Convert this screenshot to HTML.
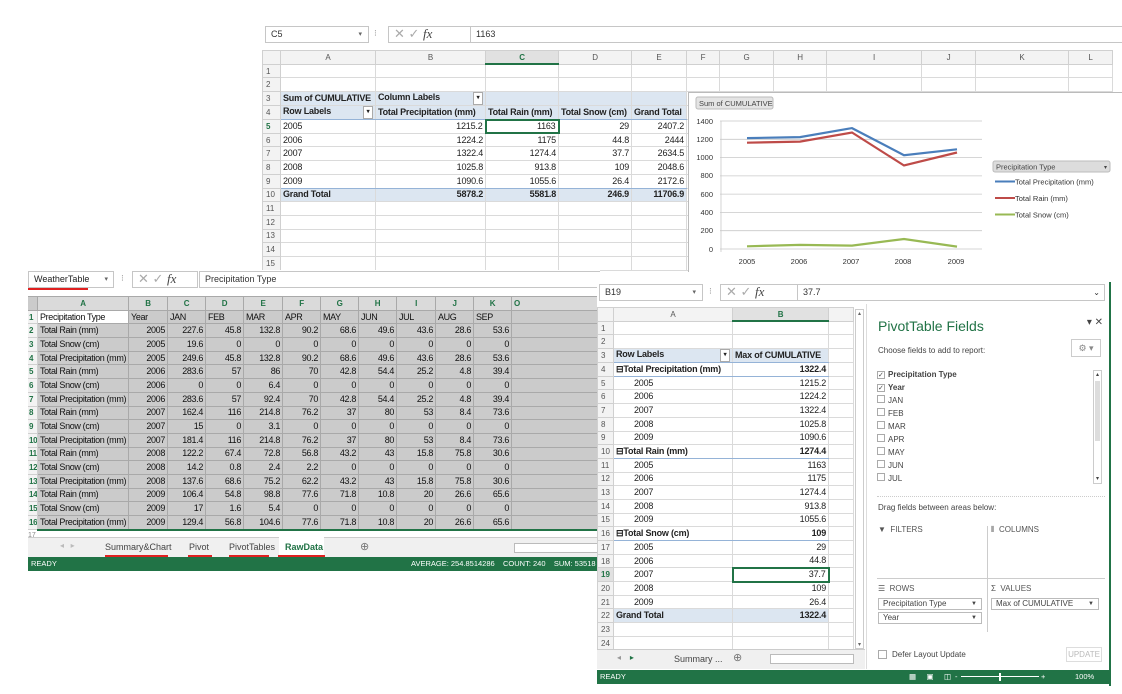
<!DOCTYPE html>
<html><head><meta charset="utf-8"><style>
*{margin:0;padding:0;box-sizing:border-box}
body{width:1122px;height:694px;background:#fff;position:relative;overflow:hidden;font-family:"Liberation Sans",Arial,sans-serif;color:#222}
.abs{position:absolute}
.win{position:absolute;background:#fff;overflow:hidden}
.fbar{position:absolute;height:17px;border:1px solid #c6c6c6;background:#fff;font-size:9px;line-height:15px;padding-left:5px;color:#333}
table{border-collapse:collapse;table-layout:fixed;position:absolute}
td{border:1px solid #dadada;font-size:9px;line-height:11px;padding:0 2px;white-space:nowrap;overflow:hidden;height:13.7px;letter-spacing:-0.2px}
tr{height:13.7px}
.rh{background:#f3f3f3;color:#555;text-align:left;font-size:8px;padding-left:3px;border-color:#d0d0d0;letter-spacing:0}
.ch td{background:#f3f3f3;color:#555;text-align:center;font-size:8px;border-color:#d0d0d0}
.r{text-align:right}
.b{font-weight:bold}
.pv td.p{background:#dce6f1}
.gr td{background:#cbcbcb;border-color:#a9a9a9;color:#111;letter-spacing:-0.35px}
.gr td.rh{background:#f3f3f3;color:#217346;font-weight:bold;border-color:#d0d0d0}
.status{position:absolute;background:#217346;color:#fff;font-size:7.5px;line-height:14px;padding-left:3px}
.tab{position:absolute;font-size:9px;color:#444}
.ul{position:absolute;height:2px;background:#e02020}
</style></head><body>

<!-- WINDOW 1 -->
<div class="win" style="left:262px;top:24px;width:860px;height:248px">
 <div class="fbar" style="left:3px;top:2px;width:104px">C5<span style="position:absolute;right:6px;font-size:7px;color:#666">▾</span></div>
 <div class="abs" style="left:112px;top:4px;font-size:9px;color:#999">⁝</div>
 <div class="fbar" style="left:126px;top:2px;width:84px;color:#aaa;font-size:13px;line-height:14px">✕ ✓ <i style="font-family:'Liberation Serif';color:#444">fx</i></div>
 <div class="fbar" style="left:208px;top:2px;width:660px">1163</div>
 <table style="left:0;top:26px;width:850px">
  <colgroup><col style="width:18px"><col style="width:95px"><col style="width:110px"><col style="width:73px"><col style="width:73px"><col style="width:55px"><col style="width:33px"><col style="width:54px"><col style="width:53px"><col style="width:95px"><col style="width:54px"><col style="width:93px"><col style="width:44px"></colgroup>
  <tr class="ch"><td></td><td>A</td><td>B</td><td style="color:#217346;font-weight:bold;background:#e1e1e1;border-bottom:2px solid #217346">C</td><td>D</td><td>E</td><td>F</td><td>G</td><td>H</td><td>I</td><td>J</td><td>K</td><td>L</td></tr>
  <tr><td class="rh">1</td><td></td><td></td><td></td><td></td><td></td><td></td><td></td><td></td><td></td><td></td><td></td><td></td></tr>
  <tr><td class="rh">2</td><td></td><td></td><td></td><td></td><td></td><td></td><td></td><td></td><td></td><td></td><td></td><td></td></tr>
  <tr class="pv"><td class="rh">3</td><td class="p b">Sum of CUMULATIVE</td><td class="p b">Column Labels <span style="float:right;border:1px solid #aaa;background:#fff;font-size:6px;width:10px;text-align:center">▾</span></td><td class="p"></td><td class="p"></td><td class="p"></td><td></td><td></td><td></td><td></td><td></td><td></td><td></td></tr>
  <tr class="pv"><td class="rh">4</td><td class="p b" style="border-bottom:1px solid #95b3d7">Row Labels<span style="float:right;border:1px solid #aaa;background:#fff;font-size:6px;width:10px;text-align:center">▾</span></td><td class="p b" style="border-bottom:1px solid #95b3d7">Total Precipitation (mm)</td><td class="p b" style="border-bottom:1px solid #95b3d7">Total Rain (mm)</td><td class="p b" style="border-bottom:1px solid #95b3d7">Total Snow (cm)</td><td class="p b" style="border-bottom:1px solid #95b3d7">Grand Total</td><td></td><td></td><td></td><td></td><td></td><td></td><td></td></tr>
  <tr><td class="rh" style="color:#217346;font-weight:bold">5</td><td>2005</td><td class="r">1215.2</td><td class="r" style="border:2px solid #217346">1163</td><td class="r">29</td><td class="r">2407.2</td><td></td><td></td><td></td><td></td><td></td><td></td><td></td></tr>
  <tr><td class="rh">6</td><td>2006</td><td class="r">1224.2</td><td class="r">1175</td><td class="r">44.8</td><td class="r">2444</td><td></td><td></td><td></td><td></td><td></td><td></td><td></td></tr>
  <tr><td class="rh">7</td><td>2007</td><td class="r">1322.4</td><td class="r">1274.4</td><td class="r">37.7</td><td class="r">2634.5</td><td></td><td></td><td></td><td></td><td></td><td></td><td></td></tr>
  <tr><td class="rh">8</td><td>2008</td><td class="r">1025.8</td><td class="r">913.8</td><td class="r">109</td><td class="r">2048.6</td><td></td><td></td><td></td><td></td><td></td><td></td><td></td></tr>
  <tr><td class="rh">9</td><td style="border-bottom:1px solid #95b3d7">2009</td><td class="r" style="border-bottom:1px solid #95b3d7">1090.6</td><td class="r" style="border-bottom:1px solid #95b3d7">1055.6</td><td class="r" style="border-bottom:1px solid #95b3d7">26.4</td><td class="r" style="border-bottom:1px solid #95b3d7">2172.6</td><td></td><td></td><td></td><td></td><td></td><td></td><td></td></tr>
  <tr class="pv"><td class="rh">10</td><td class="p b">Grand Total</td><td class="p b r">5878.2</td><td class="p b r">5581.8</td><td class="p b r">246.9</td><td class="p b r">11706.9</td><td></td><td></td><td></td><td></td><td></td><td></td><td></td></tr>
  <tr><td class="rh">11</td><td></td><td></td><td></td><td></td><td></td><td></td><td></td><td></td><td></td><td></td><td></td><td></td></tr>
  <tr><td class="rh">12</td><td></td><td></td><td></td><td></td><td></td><td></td><td></td><td></td><td></td><td></td><td></td><td></td></tr>
  <tr><td class="rh">13</td><td></td><td></td><td></td><td></td><td></td><td></td><td></td><td></td><td></td><td></td><td></td><td></td></tr>
  <tr><td class="rh">14</td><td></td><td></td><td></td><td></td><td></td><td></td><td></td><td></td><td></td><td></td><td></td><td></td></tr>
  <tr><td class="rh">15</td><td></td><td></td><td></td><td></td><td></td><td></td><td></td><td></td><td></td><td></td><td></td><td></td></tr>
 </table>
</div>

<!-- CHART -->
<svg class="abs" style="left:688px;top:92px" width="434" height="180" viewBox="688 92 434 180">
 <rect x="688.5" y="92.5" width="440" height="190" fill="#fff" stroke="#bbb"/>
 <rect x="696" y="97" width="77" height="12" rx="2" fill="#e4e4e4" stroke="#bbb"/>
 <text x="699" y="106" font-size="7.5" fill="#444" font-family="Liberation Sans">Sum of CUMULATIVE</text>
 <g stroke="#c9c9c9" stroke-width="0.8">
  <line x1="720" x2="982" y1="121" y2="121"/><line x1="720" x2="982" y1="139.3" y2="139.3"/><line x1="720" x2="982" y1="157.6" y2="157.6"/><line x1="720" x2="982" y1="175.9" y2="175.9"/><line x1="720" x2="982" y1="194.1" y2="194.1"/><line x1="720" x2="982" y1="212.4" y2="212.4"/><line x1="720" x2="982" y1="230.7" y2="230.7"/><line x1="720" x2="982" y1="249" y2="249"/>
  <line x1="721" x2="721" y1="121" y2="252"/>
 </g>
 <g font-size="7.5" fill="#333" font-family="Liberation Sans" text-anchor="end">
  <text x="713" y="124">1400</text><text x="713" y="142">1200</text><text x="713" y="160">1000</text><text x="713" y="178">800</text><text x="713" y="197">600</text><text x="713" y="215">400</text><text x="713" y="233">200</text><text x="713" y="252">0</text>
 </g>
 <g font-size="7.5" fill="#333" font-family="Liberation Sans" text-anchor="middle">
  <text x="747" y="264">2005</text><text x="799" y="264">2006</text><text x="851" y="264">2007</text><text x="903" y="264">2008</text><text x="956" y="264">2009</text>
 </g>
 <polyline fill="none" stroke="#4a7ebb" stroke-width="2.2" points="747,138.1 800,137.1 852,128.1 904,155.2 957,149.3"/>
 <polyline fill="none" stroke="#be4b48" stroke-width="2.2" points="747,142.7 800,141.6 852,132.5 904,165.5 957,152.5"/>
 <polyline fill="none" stroke="#98b954" stroke-width="2.2" points="747,246.3 800,244.9 852,245.6 904,239 957,246.6"/>
 <rect x="993" y="161" width="117" height="11" rx="2" fill="#dcdcdc" stroke="#bbb"/>
 <text x="996" y="169.5" font-size="7.5" fill="#444" font-family="Liberation Sans">Precipitation Type</text>
 <text x="1104" y="169" font-size="6" fill="#444">▾</text>
 <line x1="995" x2="1015" y1="181.5" y2="181.5" stroke="#4a7ebb" stroke-width="2"/>
 <line x1="995" x2="1015" y1="198" y2="198" stroke="#be4b48" stroke-width="2"/>
 <line x1="995" x2="1015" y1="214.5" y2="214.5" stroke="#98b954" stroke-width="2"/>
 <g font-size="7.5" fill="#333" font-family="Liberation Sans">
  <text x="1015" y="184.5">Total Precipitation (mm)</text><text x="1015" y="201">Total Rain (mm)</text><text x="1015" y="217.5">Total Snow (cm)</text>
 </g>
</svg>

<!-- WINDOW 2 -->
<div class="win" style="left:28px;top:270px;width:572px;height:302px">
 <div class="fbar" style="left:0;top:1px;width:86px;color:#222">WeatherTable<span style="position:absolute;right:5px;font-size:7px;color:#666">▾</span></div>
 <div class="ul" style="left:0;top:18px;width:60px"></div>
 <div class="abs" style="left:93px;top:3px;font-size:9px;color:#999">⁝</div>
 <div class="fbar" style="left:104px;top:1px;width:66px;color:#aaa;font-size:13px;line-height:14px">✕ ✓ <i style="font-family:'Liberation Serif';color:#444">fx</i></div>
 <div class="fbar" style="left:171px;top:1px;width:410px">Precipitation Type</div>
 <table style="left:-3px;top:26px;width:590px" class="gr">
  <colgroup><col style="width:12px"><col style="width:91px"><col style="width:39px"><col style="width:38px"><col style="width:38px"><col style="width:39px"><col style="width:38px"><col style="width:38px"><col style="width:38px"><col style="width:39px"><col style="width:38px"><col style="width:38px"><col style="width:138px"></colgroup>
  <tr class="ch"><td></td><td style="background:#dadada;color:#217346;font-weight:bold">A</td><td style="background:#dadada;color:#217346;font-weight:bold">B</td><td style="background:#dadada;color:#217346;font-weight:bold">C</td><td style="background:#dadada;color:#217346;font-weight:bold">D</td><td style="background:#dadada;color:#217346;font-weight:bold">E</td><td style="background:#dadada;color:#217346;font-weight:bold">F</td><td style="background:#dadada;color:#217346;font-weight:bold">G</td><td style="background:#dadada;color:#217346;font-weight:bold">H</td><td style="background:#dadada;color:#217346;font-weight:bold">I</td><td style="background:#dadada;color:#217346;font-weight:bold">J</td><td style="background:#dadada;color:#217346;font-weight:bold">K</td><td style="background:#dadada;color:#217346;font-weight:bold;text-align:left">O</td></tr>
  <tr><td class="rh">1</td><td style="background:#fff">Precipitation Type</td><td>Year</td><td>JAN</td><td>FEB</td><td>MAR</td><td>APR</td><td>MAY</td><td>JUN</td><td>JUL</td><td>AUG</td><td>SEP</td><td></td></tr>
  <tr><td class="rh">2</td><td>Total Rain (mm)</td><td class="r">2005</td><td class="r">227.6</td><td class="r">45.8</td><td class="r">132.8</td><td class="r">90.2</td><td class="r">68.6</td><td class="r">49.6</td><td class="r">43.6</td><td class="r">28.6</td><td class="r">53.6</td><td></td></tr>
  <tr><td class="rh">3</td><td>Total Snow (cm)</td><td class="r">2005</td><td class="r">19.6</td><td class="r">0</td><td class="r">0</td><td class="r">0</td><td class="r">0</td><td class="r">0</td><td class="r">0</td><td class="r">0</td><td class="r">0</td><td></td></tr>
  <tr><td class="rh">4</td><td>Total Precipitation (mm)</td><td class="r">2005</td><td class="r">249.6</td><td class="r">45.8</td><td class="r">132.8</td><td class="r">90.2</td><td class="r">68.6</td><td class="r">49.6</td><td class="r">43.6</td><td class="r">28.6</td><td class="r">53.6</td><td></td></tr>
  <tr><td class="rh">5</td><td>Total Rain (mm)</td><td class="r">2006</td><td class="r">283.6</td><td class="r">57</td><td class="r">86</td><td class="r">70</td><td class="r">42.8</td><td class="r">54.4</td><td class="r">25.2</td><td class="r">4.8</td><td class="r">39.4</td><td></td></tr>
  <tr><td class="rh">6</td><td>Total Snow (cm)</td><td class="r">2006</td><td class="r">0</td><td class="r">0</td><td class="r">6.4</td><td class="r">0</td><td class="r">0</td><td class="r">0</td><td class="r">0</td><td class="r">0</td><td class="r">0</td><td></td></tr>
  <tr><td class="rh">7</td><td>Total Precipitation (mm)</td><td class="r">2006</td><td class="r">283.6</td><td class="r">57</td><td class="r">92.4</td><td class="r">70</td><td class="r">42.8</td><td class="r">54.4</td><td class="r">25.2</td><td class="r">4.8</td><td class="r">39.4</td><td></td></tr>
  <tr><td class="rh">8</td><td>Total Rain (mm)</td><td class="r">2007</td><td class="r">162.4</td><td class="r">116</td><td class="r">214.8</td><td class="r">76.2</td><td class="r">37</td><td class="r">80</td><td class="r">53</td><td class="r">8.4</td><td class="r">73.6</td><td></td></tr>
  <tr><td class="rh">9</td><td>Total Snow (cm)</td><td class="r">2007</td><td class="r">15</td><td class="r">0</td><td class="r">3.1</td><td class="r">0</td><td class="r">0</td><td class="r">0</td><td class="r">0</td><td class="r">0</td><td class="r">0</td><td></td></tr>
  <tr><td class="rh">10</td><td>Total Precipitation (mm)</td><td class="r">2007</td><td class="r">181.4</td><td class="r">116</td><td class="r">214.8</td><td class="r">76.2</td><td class="r">37</td><td class="r">80</td><td class="r">53</td><td class="r">8.4</td><td class="r">73.6</td><td></td></tr>
  <tr><td class="rh">11</td><td>Total Rain (mm)</td><td class="r">2008</td><td class="r">122.2</td><td class="r">67.4</td><td class="r">72.8</td><td class="r">56.8</td><td class="r">43.2</td><td class="r">43</td><td class="r">15.8</td><td class="r">75.8</td><td class="r">30.6</td><td></td></tr>
  <tr><td class="rh">12</td><td>Total Snow (cm)</td><td class="r">2008</td><td class="r">14.2</td><td class="r">0.8</td><td class="r">2.4</td><td class="r">2.2</td><td class="r">0</td><td class="r">0</td><td class="r">0</td><td class="r">0</td><td class="r">0</td><td></td></tr>
  <tr><td class="rh">13</td><td>Total Precipitation (mm)</td><td class="r">2008</td><td class="r">137.6</td><td class="r">68.6</td><td class="r">75.2</td><td class="r">62.2</td><td class="r">43.2</td><td class="r">43</td><td class="r">15.8</td><td class="r">75.8</td><td class="r">30.6</td><td></td></tr>
  <tr><td class="rh">14</td><td>Total Rain (mm)</td><td class="r">2009</td><td class="r">106.4</td><td class="r">54.8</td><td class="r">98.8</td><td class="r">77.6</td><td class="r">71.8</td><td class="r">10.8</td><td class="r">20</td><td class="r">26.6</td><td class="r">65.6</td><td></td></tr>
  <tr><td class="rh">15</td><td>Total Snow (cm)</td><td class="r">2009</td><td class="r">17</td><td class="r">1.6</td><td class="r">5.4</td><td class="r">0</td><td class="r">0</td><td class="r">0</td><td class="r">0</td><td class="r">0</td><td class="r">0</td><td></td></tr>
  <tr><td class="rh">16</td><td>Total Precipitation (mm)</td><td class="r">2009</td><td class="r">129.4</td><td class="r">56.8</td><td class="r">104.6</td><td class="r">77.6</td><td class="r">71.8</td><td class="r">10.8</td><td class="r">20</td><td class="r">26.6</td><td class="r">65.6</td><td></td></tr>
 </table>
 <div class="abs" style="left:9px;top:259px;width:560px;height:2px;background:#217346"></div>
 <div class="abs" style="left:0;top:262px;width:572px;height:6px;background:#fff;font-size:7px;color:#888">17</div>
 <div class="abs" style="left:0;top:267px;width:572px;height:20px;background:#f0f0f0;border-top:1px solid #ccc"></div>
 <div class="tab" style="left:32px;top:271px;color:#bbb;font-size:8px">◂ &nbsp; ▸</div>
 <div class="tab" style="left:77px;top:272px">Summary&amp;Chart</div><div class="ul" style="left:77px;top:285px;width:63px"></div>
 <div class="tab" style="left:161px;top:272px">Pivot</div><div class="ul" style="left:160px;top:285px;width:24px"></div>
 <div class="tab" style="left:201px;top:272px">PivotTables</div><div class="ul" style="left:201px;top:285px;width:40px"></div>
 <div class="abs" style="left:251px;top:267px;width:45px;height:18px;background:#fff"></div>
 <div class="tab" style="left:257px;top:272px;color:#217346;font-weight:bold">RawData</div><div class="ul" style="left:250px;top:285px;width:47px"></div>
 <div class="tab" style="left:332px;top:270px;color:#777;font-size:11px">⊕</div>
 <div class="abs" style="left:486px;top:273px;width:90px;height:10px;border:1px solid #bbb;background:#fff"></div>
 <div class="status" style="left:0;top:287px;width:572px">READY<span style="position:absolute;left:383px">AVERAGE: 254.8514286 &nbsp;&nbsp; COUNT: 240 &nbsp;&nbsp; SUM: 53518</span></div>
</div>

<!-- WINDOW 3 -->
<div class="win" style="left:597px;top:282px;width:514px;height:404px;border-right:2px solid #217346">
 <div class="fbar" style="left:2px;top:2px;width:104px">B19<span style="position:absolute;right:6px;font-size:7px;color:#666">▾</span></div>
 <div class="abs" style="left:112px;top:4px;font-size:9px;color:#999">⁝</div>
 <div class="fbar" style="left:123px;top:2px;width:78px;color:#aaa;font-size:13px;line-height:14px">✕ ✓ <i style="font-family:'Liberation Serif';color:#444">fx</i></div>
 <div class="fbar" style="left:200px;top:2px;width:308px">37.7<span style="position:absolute;right:4px;font-size:8px">⌄</span></div>
 <table style="left:0;top:25px;width:256px">
  <colgroup><col style="width:16px"><col style="width:119px"><col style="width:96px"><col style="width:25px"></colgroup>
  <tr class="ch"><td></td><td>A</td><td style="color:#217346;font-weight:bold;background:#e1e1e1;border-bottom:2px solid #217346">B</td><td></td></tr>
  <tr><td class="rh">1</td><td></td><td></td><td></td></tr>
  <tr><td class="rh">2</td><td></td><td></td><td></td></tr>
  <tr class="pv"><td class="rh">3</td><td class="p b" style="border-bottom:1px solid #95b3d7">Row Labels<span style="float:right;border:1px solid #aaa;background:#fff;font-size:6px;width:10px;text-align:center">▾</span></td><td class="p b" style="border-bottom:1px solid #95b3d7">Max of CUMULATIVE</td><td></td></tr>
  <tr><td class="rh">4</td><td class="b" style="border-bottom:1px solid #95b3d7">⊟Total Precipitation (mm)</td><td class="b r" style="border-bottom:1px solid #95b3d7">1322.4</td><td></td></tr>
  <tr><td class="rh">5</td><td style="padding-left:20px">2005</td><td class="r">1215.2</td><td></td></tr>
  <tr><td class="rh">6</td><td style="padding-left:20px">2006</td><td class="r">1224.2</td><td></td></tr>
  <tr><td class="rh">7</td><td style="padding-left:20px">2007</td><td class="r">1322.4</td><td></td></tr>
  <tr><td class="rh">8</td><td style="padding-left:20px">2008</td><td class="r">1025.8</td><td></td></tr>
  <tr><td class="rh">9</td><td style="padding-left:20px">2009</td><td class="r">1090.6</td><td></td></tr>
  <tr><td class="rh">10</td><td class="b" style="border-bottom:1px solid #95b3d7">⊟Total Rain (mm)</td><td class="b r" style="border-bottom:1px solid #95b3d7">1274.4</td><td></td></tr>
  <tr><td class="rh">11</td><td style="padding-left:20px">2005</td><td class="r">1163</td><td></td></tr>
  <tr><td class="rh">12</td><td style="padding-left:20px">2006</td><td class="r">1175</td><td></td></tr>
  <tr><td class="rh">13</td><td style="padding-left:20px">2007</td><td class="r">1274.4</td><td></td></tr>
  <tr><td class="rh">14</td><td style="padding-left:20px">2008</td><td class="r">913.8</td><td></td></tr>
  <tr><td class="rh">15</td><td style="padding-left:20px">2009</td><td class="r">1055.6</td><td></td></tr>
  <tr><td class="rh">16</td><td class="b" style="border-bottom:1px solid #95b3d7">⊟Total Snow (cm)</td><td class="b r" style="border-bottom:1px solid #95b3d7">109</td><td></td></tr>
  <tr><td class="rh">17</td><td style="padding-left:20px">2005</td><td class="r">29</td><td></td></tr>
  <tr><td class="rh">18</td><td style="padding-left:20px">2006</td><td class="r">44.8</td><td></td></tr>
  <tr><td class="rh" style="color:#217346;font-weight:bold;background:#e1e1e1">19</td><td style="padding-left:20px">2007</td><td class="r" style="border:2px solid #217346">37.7</td><td></td></tr>
  <tr><td class="rh">20</td><td style="padding-left:20px">2008</td><td class="r">109</td><td></td></tr>
  <tr><td class="rh">21</td><td style="padding-left:20px">2009</td><td class="r">26.4</td><td></td></tr>
  <tr class="pv"><td class="rh">22</td><td class="p b">Grand Total</td><td class="p b r">1322.4</td><td></td></tr>
  <tr><td class="rh">23</td><td></td><td></td><td></td></tr>
  <tr><td class="rh">24</td><td></td><td></td><td></td></tr>
 </table>
 <div class="abs" style="left:258px;top:27px;width:9px;height:340px;border:1px solid #ccc;background:#fff;font-size:6px;color:#666;text-align:center">▴<div style="position:absolute;bottom:0;width:100%">▾</div></div>
 <div class="abs" style="left:0;top:367px;width:268px;height:20px;background:#f0f0f0;border-top:1px solid #ccc"></div>
 <div class="tab" style="left:20px;top:371px;color:#999;font-size:8px">◂ &nbsp;&nbsp; <span style="color:#217346">▸</span></div>
 <div class="tab" style="left:77px;top:372px">Summary ...</div>
 <div class="tab" style="left:136px;top:369px;color:#777;font-size:11px">⊕</div>
 <div class="abs" style="left:173px;top:372px;width:84px;height:10px;border:1px solid #bbb;background:#fff"></div>
 <!-- panel -->
 <div class="abs" style="left:269px;top:22px;width:243px;height:365px;background:#fff;border-left:1px solid #ddd">
  <div class="abs" style="left:11px;top:14px;font-size:14px;color:#217346">PivotTable Fields</div>
  <div class="abs" style="right:6px;top:13px;font-size:10px;color:#444">▾ ✕</div>
  <div class="abs" style="left:11px;top:42px;font-size:8px;color:#444">Choose fields to add to report:</div>
  <div class="abs" style="right:8px;top:35px;width:30px;height:18px;border:1px solid #ccc;font-size:9px;color:#888;text-align:center;line-height:16px">⚙ ▾</div>
  <div class="abs" style="left:10px;top:64px;width:225px;height:118px;font-size:8px;line-height:13px;color:#444">
   <div><span style="display:inline-block;width:8px;height:8px;border:1px solid #aaa;font-size:7px;line-height:7px;margin-right:3px">✓</span><b>Precipitation Type</b></div>
   <div><span style="display:inline-block;width:8px;height:8px;border:1px solid #aaa;font-size:7px;line-height:7px;margin-right:3px">✓</span><b>Year</b></div>
   <div><span style="display:inline-block;width:8px;height:8px;border:1px solid #aaa;margin-right:3px"></span>JAN</div>
   <div><span style="display:inline-block;width:8px;height:8px;border:1px solid #aaa;margin-right:3px"></span>FEB</div>
   <div><span style="display:inline-block;width:8px;height:8px;border:1px solid #aaa;margin-right:3px"></span>MAR</div>
   <div><span style="display:inline-block;width:8px;height:8px;border:1px solid #aaa;margin-right:3px"></span>APR</div>
   <div><span style="display:inline-block;width:8px;height:8px;border:1px solid #aaa;margin-right:3px"></span>MAY</div>
   <div><span style="display:inline-block;width:8px;height:8px;border:1px solid #aaa;margin-right:3px"></span>JUN</div>
   <div><span style="display:inline-block;width:8px;height:8px;border:1px solid #aaa;margin-right:3px"></span>JUL</div>
   <div class="abs" style="right:0;top:2px;width:9px;height:114px;border:1px solid #ccc;font-size:6px;text-align:center;line-height:8px">▴<div style="position:absolute;top:10px;left:1px;width:5px;height:60px;background:#ddd"></div><div style="position:absolute;bottom:0;width:100%">▾</div></div>
  </div>
  <div class="abs" style="left:10px;top:192px;width:228px;border-top:1px dotted #ccc"></div>
  <div class="abs" style="left:11px;top:199px;font-size:8px;color:#444">Drag fields between areas below:</div>
  <div class="abs" style="left:11px;top:221px;font-size:8px;color:#555">▼ &nbsp;FILTERS</div>
  <div class="abs" style="left:124px;top:221px;font-size:8px;color:#555">⦀ &nbsp;COLUMNS</div>
  <div class="abs" style="left:120px;top:222px;height:106px;border-left:1px solid #ccc"></div>
  <div class="abs" style="left:10px;top:274px;width:228px;border-top:1px solid #ccc"></div>
  <div class="abs" style="left:11px;top:280px;font-size:8px;color:#555">☰ &nbsp;ROWS</div>
  <div class="abs" style="left:124px;top:280px;font-size:8px;color:#555">Σ &nbsp;VALUES</div>
  <div class="abs" style="left:11px;top:294px;width:104px;height:12px;border:1px solid #bbb;font-size:8px;line-height:10px;padding-left:4px;color:#444">Precipitation Type<span style="position:absolute;right:4px;font-size:6px">▼</span></div>
  <div class="abs" style="left:11px;top:308px;width:104px;height:12px;border:1px solid #bbb;font-size:8px;line-height:10px;padding-left:4px;color:#444">Year<span style="position:absolute;right:4px;font-size:6px">▼</span></div>
  <div class="abs" style="left:124px;top:294px;width:108px;height:12px;border:1px solid #bbb;font-size:8px;line-height:10px;padding-left:4px;color:#444">Max of CUMULATIVE<span style="position:absolute;right:4px;font-size:6px">▼</span></div>
  <div class="abs" style="left:11px;top:346px;width:9px;height:9px;border:1px solid #aaa"></div>
  <div class="abs" style="left:25px;top:346px;font-size:8px;color:#444">Defer Layout Update</div>
  <div class="abs" style="right:7px;top:343px;width:36px;height:15px;border:1px solid #ddd;font-size:8px;color:#bbb;text-align:center;line-height:13px">UPDATE</div>
 </div>
 <div class="status" style="left:0;top:388px;width:514px;height:14px">READY
  <span style="position:absolute;left:312px">▦ &nbsp;&nbsp;&nbsp; ▣ &nbsp;&nbsp;&nbsp; ◫</span>
  <span style="position:absolute;left:364px;top:6px;width:78px;height:1px;background:#fff"></span>
  <span style="position:absolute;left:358px">-</span><span style="position:absolute;left:444px">+</span>
  <span style="position:absolute;left:402px;top:3px;width:2px;height:8px;background:#fff"></span>
  <span style="position:absolute;left:478px">100%</span>
 </div>
</div>
</body></html>
